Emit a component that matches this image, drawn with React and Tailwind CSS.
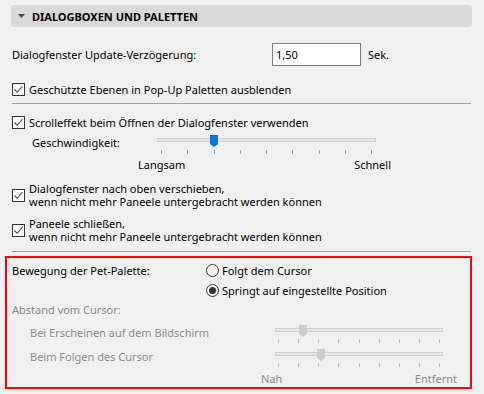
const FONT = { fontFamily: '"Noto Sans", "Open Sans", sans-serif' };

function Checkbox() {
  return (
    <span className="flex h-[13px] w-[13px] shrink-0 items-center justify-center border border-[#333333] bg-white">
      <svg width="11" height="11" viewBox="0 0 11 11">
        <path d="M1.5 5.5 L4.2 8.3 L9.5 2" fill="none" stroke="#444444" strokeWidth="1.1" />
      </svg>
    </span>
  );
}

function Radio({ checked }) {
  return (
    <span className="flex h-[13px] w-[13px] shrink-0 items-center justify-center rounded-full border border-[#333333] bg-white">
      {checked && <span className="h-[7px] w-[7px] rounded-full bg-[#333333]" />}
    </span>
  );
}

// track, thumb and tick marks of one slider
function Slider({ thumbLeft, active, tickTop, pad }) {
  return (
    <div className="relative h-full w-full">
      <div className="absolute left-0 right-0 top-[3px] h-[4px] border border-[#d0d0d0] bg-[#e6e6e6]" />
      <svg className="absolute top-0" style={{ left: thumbLeft }} width="8" height="12" viewBox="0 0 8 12">
        <path d="M0 0 H8 V9 L4 12 L0 9 Z" fill={active ? "#0078d7" : "#cccccc"} />
      </svg>
      <div className={`absolute left-0 right-0 flex justify-between ${tickTop} ${pad}`}>
        {Array.from({ length: 9 }).map((_, i) => (
          <span key={i} className={`h-[4px] w-px ${active ? "bg-[#a0a0a0]" : "bg-[#c0c0c0]"}`} />
        ))}
      </div>
    </div>
  );
}

export default function App() {
  return (
    <div className="h-[394px] w-[484px] overflow-hidden bg-[#f0f0f0] text-[11px] leading-[13px] text-black" style={FONT}>
      <div className="ml-[11px] mt-[5px] flex h-[22px] w-[461px] items-center rounded-[3px] bg-[#d9d9d9] pl-[7px]">
        <svg width="8" height="5" viewBox="0 0 8 5">
          <path d="M0 0 H7 L3.5 4 Z" fill="#444444" />
        </svg>
        <span className="ml-[6px] font-bold">DIALOGBOXEN UND PALETTEN</span>
      </div>

      <div className="ml-[12px] mt-[16px] flex h-[23px] items-center">
        <span className="w-[260px]">Dialogfenster Update-Verzögerung:</span>
        <div className="flex h-[23px] w-[89px] items-center border border-[#7a7a7a] bg-white pl-[3px]">1,50</div>
        <span className="ml-[7px]">Sek.</span>
      </div>

      <div className="ml-[12px] mt-[17px] flex h-[13px] items-center gap-[4px]">
        <Checkbox />
        <span>Geschützte Ebenen in Pop-Up Paletten ausblenden</span>
      </div>

      <div className="ml-[12px] mt-[7px] h-px w-[459px] bg-[#a0a0a0]" />

      <div className="ml-[12px] mt-[12px] flex h-[13px] items-center gap-[4px]">
        <Checkbox />
        <span>Scrolleffekt beim Öffnen der Dialogfenster verwenden</span>
      </div>

      <div className="mt-[6px] flex h-[20px] items-start">
        <span className="ml-[32px] w-[125px] leading-[16px]">Geschwindigkeit:</span>
        <div className="h-[20px] w-[219px]">
          <Slider thumbLeft="53px" active tickTop="top-[15px]" pad="px-[4px]" />
        </div>
      </div>
      <div className="ml-[138px] mt-[3px] flex h-[14px] w-[253px] items-center justify-between leading-[14px]">
        <span>Langsam</span>
        <span>Schnell</span>
      </div>

      <div className="ml-[12px] mt-[10px] flex items-center gap-[4px] leading-[13px]">
        <Checkbox />
        <span>
          Dialogfenster nach oben verschieben,
          <br />
          wenn nicht mehr Paneele untergebracht werden können
        </span>
      </div>

      <div className="ml-[12px] mt-[9px] flex items-center gap-[4px] leading-[13px]">
        <Checkbox />
        <span>
          Paneele schließen,
          <br />
          wenn nicht mehr Paneele untergebracht werden können
        </span>
      </div>

      <div className="ml-[12px] mt-[8px] h-px w-[459px] bg-[#a0a0a0]" />

      <div className="ml-[5px] mt-[4px] h-[133px] w-[467px] border-2 border-[#ff0000] pl-[5px]">
        <div className="mt-[4px] flex h-[16px] items-center">
          <span className="w-[194px]">Bewegung der Pet-Palette:</span>
          <Radio />
          <span className="ml-[3px]">Folgt dem Cursor</span>
        </div>
        <div className="mt-[4px] flex h-[16px] items-center pl-[194px]">
          <Radio checked />
          <span className="ml-[3px]">Springt auf eingestellte Position</span>
        </div>
        <div className="mt-[3px] flex h-[16px] items-center text-[#8c8c8c]">Abstand vom Cursor:</div>

        <div className="mt-[8px] flex h-[24px] items-start text-[#8c8c8c]">
          <span className="ml-[18px] w-[245px] leading-[16px]">Bei Erscheinen auf dem Bildschirm</span>
          <div className="h-[20px] w-[168px]">
            <Slider thumbLeft="24px" tickTop="top-[14px]" pad="px-[3px]" />
          </div>
        </div>
        <div className="flex h-[20px] items-start text-[#8c8c8c]">
          <span className="ml-[18px] w-[245px] leading-[16px]">Beim Folgen des Cursor</span>
          <div className="h-[20px] w-[168px]">
            <Slider thumbLeft="42px" tickTop="top-[14px]" pad="px-[3px]" />
          </div>
        </div>

        <div className="ml-[249px] mt-[3px] flex h-[14px] w-[196px] items-center justify-between leading-[14px] text-[#8c8c8c]">
          <span>Nah</span>
          <span>Entfernt</span>
        </div>
      </div>
    </div>
  );
}
